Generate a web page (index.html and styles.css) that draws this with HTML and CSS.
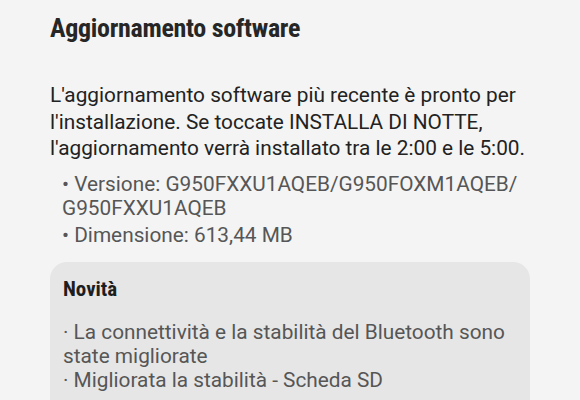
FILE: index.html
```html
<!DOCTYPE html>
<html lang="it">
<head>
<meta charset="utf-8">
<title>Aggiornamento software</title>
<link rel="stylesheet" href="styles.css">
</head>
<body>
<main class="page">
  <h1 class="title">Aggiornamento software</h1>
  <p class="intro">L'aggiornamento software più recente è pronto per l'installazione. Se toccate INSTALLA DI NOTTE, l'aggiornamento verrà installato tra le 2:00 e le 5:00.</p>
  <ul class="info">
    <li>• Versione: G950FXXU1AQEB/G950FOXM1AQEB/ G950FXXU1AQEB</li>
    <li>• Dimensione: 613,44 MB</li>
  </ul>
  <section class="card">
    <h2 class="card-title">Novità</h2>
    <div class="card-body">
      <p>· La connettività e la stabilità del Bluetooth sono state migliorate</p>
      <p>· Migliorata la stabilità - Scheda SD</p>
    </div>
  </section>
</main>
</body>
</html>
```

FILE: styles.css
```css
html, body {
  margin: 0;
  padding: 0;
}

body {
  background: #f4f4f4;
  font-family: Roboto, "Noto Sans", sans-serif;
  color: #222222;
  width: 580px;
  height: 400px;
  overflow: hidden;
}

.page {
  padding: 13px 50px 0 50px;
}

.title {
  margin: 0;
  font-size: 26px;
  line-height: 30px;
  font-weight: 700;
  font-stretch: 80%;
  letter-spacing: -0.3px;
  color: #262626;
}

.intro {
  margin: 39px 0 0 0;
  font-size: 20.8px;
  line-height: 26.5px;
  color: #222222;
}

.info {
  list-style: none;
  margin: 10px 0 0 0;
  padding: 0 0 0 12px;
  font-size: 20.8px;
  line-height: 24.5px;
  color: #565656;
  display: flex;
  flex-direction: column;
  gap: 2px;
}

.card {
  margin-top: 15px;
  background: #e6e6e6;
  border-radius: 17px;
  padding: 15px 14px 24px 13px;
}

.card-title {
  margin: 0;
  font-size: 21px;
  line-height: 25px;
  font-weight: 700;
  font-stretch: 80%;
  color: #1e1e1e;
}

.card-body {
  margin-top: 18px;
  font-size: 20.8px;
  line-height: 24px;
  color: #565656;
}

.card-body p {
  margin: 0;
}
```
